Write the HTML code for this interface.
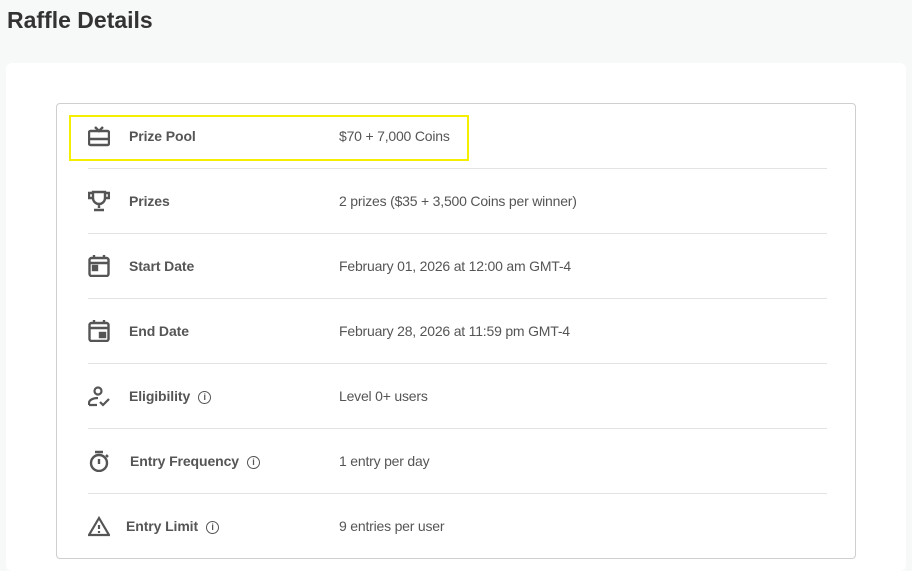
<!DOCTYPE html><html><head><style>
html,body{margin:0;width:912px;height:571px;overflow:hidden}
body{background:#f7f8f8;font-family:"Liberation Sans",sans-serif;position:relative}
h1{position:absolute;left:7px;top:7px;margin:0;font-size:23px;font-weight:bold;color:#333}
.card{position:absolute;left:6px;top:63px;width:900px;height:508px;background:#fff;border-radius:6px}
.box{position:absolute;left:56px;top:103px;width:798px;height:454px;border:1px solid #cfcfcf;border-radius:4px;background:#fff}
.row{position:absolute;left:31px;width:739px;height:65px;box-sizing:border-box;border-bottom:1px solid #e3e3e3}
.row:last-child{border-bottom:none}
.ic{position:absolute;left:0;top:21px;width:22px;height:22px}
.lb{position:absolute;left:41px;top:24px;font-size:14px;font-weight:bold;color:#555;letter-spacing:-0.1px}
.vl{position:absolute;left:251px;top:24px;font-size:14px;color:#555;letter-spacing:-0.2px}
.i{display:inline-block;width:11px;height:11px;border:1.3px solid #555;border-radius:50%;font-size:9px;text-align:center;line-height:11px;margin-left:8px;vertical-align:1px;font-weight:bold}
.hl{position:absolute;left:69px;top:115px;width:396px;height:42px;border:2px solid #f5ee00}
</style></head><body>
<h1>Raffle Details</h1>
<div class="card"></div>
<div class="box">
<div class="row" style="top:0"><svg class="ic" viewBox="0 0 22 22" fill="none" stroke="#555" stroke-width="2.4"><rect x="1" y="6" width="20" height="14" rx="1.5"/><path d="M1 14h20M7 2l4 4 4-4" /></svg><div class="lb">Prize Pool</div><div class="vl">$70 + 7,000 Coins</div></div>
<div class="row" style="top:65px"><svg class="ic" viewBox="0 0 22 22" fill="none" stroke="#555" stroke-width="2.4"><path d="M5 2h12v6a6 6 0 0 1-12 0zM5 3H1v5h4M17 3h4v5h-4M11 14v4M6 20h10"/></svg><div class="lb">Prizes</div><div class="vl">2 prizes ($35 + 3,500 Coins per winner)</div></div>
<div class="row" style="top:130px"><svg class="ic" viewBox="0 0 22 22" fill="none" stroke="#555" stroke-width="2.4"><rect x="1.5" y="3" width="19" height="18" rx="2"/><path d="M1 8h20M6 0v4M16 0v4"/><rect x="5" y="11" width="4" height="4" fill="#555"/></svg><div class="lb">Start Date</div><div class="vl">February 01, 2026 at 12:00 am GMT-4</div></div>
<div class="row" style="top:195px"><svg class="ic" viewBox="0 0 22 22" fill="none" stroke="#555" stroke-width="2.4"><rect x="1.5" y="3" width="19" height="18" rx="2"/><path d="M1 8h20M6 0v4M16 0v4"/><rect x="12" y="13" width="5" height="4" fill="#555"/></svg><div class="lb">End Date</div><div class="vl">February 28, 2026 at 11:59 pm GMT-4</div></div>
<div class="row" style="top:260px"><svg class="ic" viewBox="0 0 22 22" fill="none" stroke="#555" stroke-width="2.2"><circle cx="10" cy="6" r="3.5"/><path d="M1 20v-2c0-3 4-5 9-5M1 20h8M12 17l3 3 6-6"/></svg><div class="lb">Eligibility<span class="i">i</span></div><div class="vl">Level 0+ users</div></div>
<div class="row" style="top:325px"><svg class="ic" viewBox="0 0 22 22" fill="none" stroke="#555" stroke-width="2.4"><circle cx="11" cy="13" r="8"/><path d="M7 2h8M11 9v5M18 5l2 2"/></svg><div class="lb" style="left:42px">Entry Frequency<span class="i">i</span></div><div class="vl">1 entry per day</div></div>
<div class="row" style="top:390px"><svg class="ic" viewBox="0 0 22 22" fill="none" stroke="#555" stroke-width="2.2"><path d="M11 3L1 20h20z"/><path d="M11 10v4M11 16v2"/></svg><div class="lb" style="left:38px">Entry Limit<span class="i">i</span></div><div class="vl">9 entries per user</div></div>
</div>
<div class="hl"></div>
</body></html>
